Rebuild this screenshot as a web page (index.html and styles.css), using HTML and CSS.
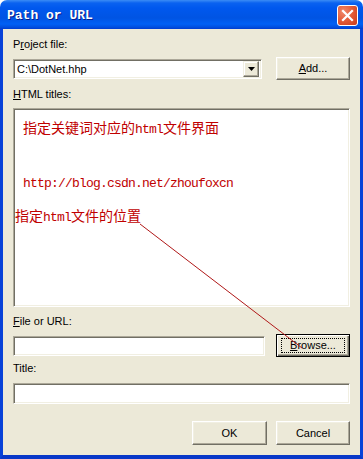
FILE: index.html
```html
<!DOCTYPE html>
<html>
<head>
<meta charset="utf-8">
<link rel="stylesheet" href="styles.css">
</head>
<body>
<div class="window">
  <div class="titlebar">
    <span class="title">Path or URL</span>
    <span class="close"><svg width="13" height="13" viewBox="0 0 13 13"><path d="M2 2 L11 11 M11 2 L2 11" stroke="#fff" stroke-width="2.2" stroke-linecap="square"/></svg></span>
  </div>
  <div class="client">
    <div class="label l1">P<u>r</u>oject file:</div>
    <div class="row r1">
      <div class="combo">
        <span class="combo-text">C:\DotNet.hhp</span>
        <span class="drop"><svg width="7" height="4" viewBox="0 0 7 4"><path d="M0 0 H7 L3.5 4 Z" fill="#000"/></svg></span>
      </div>
      <div class="btn"><u>A</u>dd...</div>
    </div>
    <div class="label l2"><u>H</u>TML titles:</div>
    <div class="list">
      <p class="note n1">指定关键词对应的<span class="lat">html</span>文件界面</p>
      <p class="note n2"><span class="lat">http://blog.csdn.net/zhoufoxcn</span></p>
      <p class="note n3">指定<span class="lat">html</span>文件的位置</p>
    </div>
    <div class="label l3"><u>F</u>ile or URL:</div>
    <div class="row r2">
      <div class="edit file"></div>
      <div class="btn default"><span class="focus"><u>B</u>rowse...</span></div>
    </div>
    <div class="label l4">Title:</div>
    <div class="edit titlein"></div>
    <div class="footer">
      <div class="btn ok">OK</div>
      <div class="btn cancel">Cancel</div>
    </div>
  </div>
  <svg class="arrow" width="363" height="459" viewBox="0 0 363 459"><line x1="140" y1="224" x2="302" y2="348" stroke="#b01818" stroke-width="1"/></svg>
</div>
</body>
</html>
```

FILE: styles.css
```css
html, body {
  margin: 0;
  padding: 0;
  background: #ffffff;
}
.window {
  position: relative;
  width: 363px;
  height: 459px;
  display: flex;
  flex-direction: column;
  font-family: "Liberation Sans", Arial, sans-serif;
  font-size: 11px;
  color: #000;
}
.titlebar {
  height: 29px;
  border-radius: 7px 7px 0 0;
  background: linear-gradient(#3b8cf5 0px, #0a62f0 3px, #0058ee 8px, #0054e3 18px, #0060f5 24px, #0050e0 27px, #003cd0 29px);
  display: flex;
  align-items: center;
  justify-content: space-between;
  padding: 0 5px 0 7px;
  flex-shrink: 0;
}
.title {
  font-family: "Liberation Mono", "Courier New", monospace;
  font-weight: bold;
  font-size: 13px;
  color: #fff;
  text-shadow: 1px 1px 0 #0a1e8c;
  margin-top: 2px;
}
.close {
  width: 19px;
  height: 19px;
  border: 1px solid #fff;
  border-radius: 3px;
  background: radial-gradient(circle at 30% 30%, #f08a6c, #e35a36 50%, #c83a1a);
  display: flex;
  align-items: center;
  justify-content: center;
  margin-top: 1px;
}
.client {
  flex: 1;
  background: #ece9d8;
  border-left: 3px solid #0842d8;
  border-right: 3px solid #0842d8;
  border-bottom: 4px solid #0838c8;
  padding: 0 10px;
  display: flex;
  flex-direction: column;
}
.label {
  height: 13px;
  line-height: 13px;
  white-space: nowrap;
}
.l1 { margin-top: 9px; }
.row {
  display: flex;
  align-items: center;
  justify-content: space-between;
  height: 23px;
}
.r1 { margin-top: 6px; }
.l2 { margin-top: 8px; }
.combo {
  box-sizing: border-box;
  width: 249px;
  height: 20px;
  background: #fff;
  border: 1px solid;
  border-color: #aca899 #fff #fff #aca899;
  box-shadow: inset 1px 1px #716f64, inset -1px -1px #f1efe2;
  display: flex;
  align-items: center;
  justify-content: space-between;
  padding: 2px 2px 2px 3px;
}
.combo-text { line-height: 14px; }
.drop {
  box-sizing: border-box;
  width: 16px;
  height: 16px;
  background: #ece9d8;
  border: 1px solid;
  border-color: #f1efe2 #716f64 #716f64 #f1efe2;
  box-shadow: inset -1px -1px #aca899, inset 1px 1px #fff;
  display: flex;
  align-items: center;
  justify-content: center;
}
.btn {
  box-sizing: border-box;
  width: 74px;
  height: 23px;
  background: #ece9d8;
  border: 1px solid;
  border-color: #fff #716f64 #716f64 #fff;
  box-shadow: inset -1px -1px #aca899, inset 1px 1px #f1efe2;
  display: flex;
  align-items: center;
  justify-content: center;
  line-height: 13px;
}
.btn.default {
  border: 1px solid #000;
  box-shadow: inset 1px 1px #fff, inset -1px -1px #716f64, inset -2px -2px #aca899;
}
.focus {
  box-sizing: border-box;
  width: 64px;
  height: 15px;
  border: 1px dotted #000;
  display: flex;
  align-items: center;
  justify-content: center;
}
.list {
  box-sizing: border-box;
  margin-top: 7px;
  height: 199px;
  background: #fff;
  border: 1px solid;
  border-color: #aca899 #fff #fff #aca899;
  box-shadow: inset 1px 1px #716f64, inset -1px -1px #f1efe2;
  color: #c00000;
  font-family: "Noto Sans CJK SC", sans-serif;
  font-size: 14px;
}
.note {
  margin: 0;
  height: 16px;
  line-height: 16px;
  white-space: nowrap;
}
.lat {
  font-family: "Liberation Mono", monospace;
  font-size: 13px;
  letter-spacing: -0.8px;
}
.n1 { margin: 10px 0 0 9px; }
.n2 { margin: 38px 0 0 9px; }
.n3 { margin: 18px 0 0 1px; }
.l3 { margin-top: 8px; }
.r2 { margin-top: 6px; }
.edit {
  box-sizing: border-box;
  background: #fff;
  border: 1px solid;
  border-color: #aca899 #fff #fff #aca899;
  box-shadow: inset 1px 1px #716f64, inset -1px -1px #f1efe2;
}
.file { width: 252px; height: 20px; }
.l4 { margin-top: 5px; }
.titlein { margin-top: 8px; height: 21px; }
.footer {
  margin-top: 17px;
  display: flex;
  justify-content: flex-end;
  gap: 9px;
}
.btn.ok { width: 75px; height: 24px; }
.btn.cancel { width: 74px; height: 24px; }
.arrow {
  position: absolute;
  left: 0;
  top: 0;
  pointer-events: none;
}
```
